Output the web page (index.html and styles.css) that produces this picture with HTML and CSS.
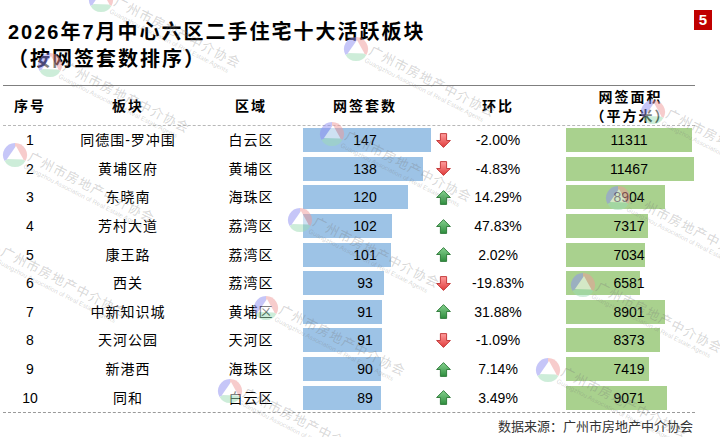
FILE: index.html
```html
<!DOCTYPE html>
<html lang="zh-CN">
<head>
<meta charset="utf-8">
<title>2026年7月中心六区二手住宅十大活跃板块</title>
<link rel="stylesheet" href="styles.css">
</head>
<body>
<svg class="defs" width="0" height="0" aria-hidden="true">
  <defs>
    <linearGradient id="gup" x1="0" y1="0" x2="0" y2="1">
      <stop offset="0" stop-color="#86d28f"/>
      <stop offset="1" stop-color="#2f8e3e"/>
    </linearGradient>
    <linearGradient id="gdn" x1="0" y1="0" x2="0" y2="1">
      <stop offset="0" stop-color="#ff9c9c"/>
      <stop offset="1" stop-color="#e03c3c"/>
    </linearGradient>
    <symbol id="up" viewBox="0 0 15 15">
      <polygon points="7.5,0.6 14.4,7.5 10.6,7.5 10.6,14.4 4.4,14.4 4.4,7.5 0.6,7.5" fill="url(#gup)" stroke="#2a7636" stroke-width="0.9" stroke-linejoin="round"/>
    </symbol>
    <symbol id="down" viewBox="0 0 15 15">
      <polygon points="4.4,0.6 10.6,0.6 10.6,7.5 14.4,7.5 7.5,14.4 0.6,7.5 4.4,7.5" fill="url(#gdn)" stroke="#c03030" stroke-width="0.9" stroke-linejoin="round"/>
    </symbol>
    <symbol id="logo" viewBox="0 0 26 26">
      <path d="M13 13 L2.6 19 A12 12 0 0 1 13 1 Z" fill="#8f8ff2"/>
      <path d="M13 13 L13 1 A12 12 0 0 1 23.4 19 Z" fill="#f09a9a"/>
      <path d="M13 13 L23.4 19 A12 12 0 0 1 2.6 19 Z" fill="#9ddcb5"/>
      <polygon points="14,4 21.5,17.5 5,17" fill="#ffffff"/>
    </symbol>
  </defs>
</svg>

<div class="page">
  <header class="head">
    <div class="title">
      <div>2026年7月中心六区二手住宅十大活跃板块</div>
      <div>（按网签套数排序）</div>
    </div>
    <div class="badge">5</div>
  </header>

  <section class="table">
    <div class="thead">
      <div class="th">序号</div>
      <div class="th">板块</div>
      <div class="th">区域</div>
      <div class="th th-bar">网签套数</div>
      <div></div>
      <div class="th">环比</div>
      <div></div>
      <div class="th th-area">网签面积<br>（平方米）</div>
    </div>
    <div class="tbody">
      <div class="row">
        <div class="cell num">1</div><div class="cell cjk">同德围-罗冲围</div><div class="cell cjk">白云区</div>
        <div class="barcell blue"><div class="bar" style="width:128px"></div><div class="val">147</div></div>
        <div class="arrow"><svg><use href="#down"/></svg></div><div class="cell pct">-2.00%</div><div></div>
        <div class="barcell green"><div class="bar" style="width:126.3px"></div><div class="val">11311</div></div>
      </div>
      <div class="row">
        <div class="cell num">2</div><div class="cell cjk">黄埔区府</div><div class="cell cjk">黄埔区</div>
        <div class="barcell blue"><div class="bar" style="width:120.2px"></div><div class="val">138</div></div>
        <div class="arrow"><svg><use href="#down"/></svg></div><div class="cell pct">-4.83%</div><div></div>
        <div class="barcell green"><div class="bar" style="width:128px"></div><div class="val">11467</div></div>
      </div>
      <div class="row">
        <div class="cell num">3</div><div class="cell cjk">东晓南</div><div class="cell cjk">海珠区</div>
        <div class="barcell blue"><div class="bar" style="width:104.5px"></div><div class="val">120</div></div>
        <div class="arrow"><svg><use href="#up"/></svg></div><div class="cell pct">14.29%</div><div></div>
        <div class="barcell green"><div class="bar" style="width:99.4px"></div><div class="val">8904</div></div>
      </div>
      <div class="row">
        <div class="cell num">4</div><div class="cell cjk">芳村大道</div><div class="cell cjk">荔湾区</div>
        <div class="barcell blue"><div class="bar" style="width:88.8px"></div><div class="val">102</div></div>
        <div class="arrow"><svg><use href="#up"/></svg></div><div class="cell pct">47.83%</div><div></div>
        <div class="barcell green"><div class="bar" style="width:81.7px"></div><div class="val">7317</div></div>
      </div>
      <div class="row">
        <div class="cell num">5</div><div class="cell cjk">康王路</div><div class="cell cjk">荔湾区</div>
        <div class="barcell blue"><div class="bar" style="width:87.9px"></div><div class="val">101</div></div>
        <div class="arrow"><svg><use href="#up"/></svg></div><div class="cell pct">2.02%</div><div></div>
        <div class="barcell green"><div class="bar" style="width:78.5px"></div><div class="val">7034</div></div>
      </div>
      <div class="row">
        <div class="cell num">6</div><div class="cell cjk">西关</div><div class="cell cjk">荔湾区</div>
        <div class="barcell blue"><div class="bar" style="width:81px"></div><div class="val">93</div></div>
        <div class="arrow"><svg><use href="#down"/></svg></div><div class="cell pct">-19.83%</div><div></div>
        <div class="barcell green"><div class="bar" style="width:73.5px"></div><div class="val">6581</div></div>
      </div>
      <div class="row">
        <div class="cell num">7</div><div class="cell cjk">中新知识城</div><div class="cell cjk">黄埔区</div>
        <div class="barcell blue"><div class="bar" style="width:79.2px"></div><div class="val">91</div></div>
        <div class="arrow"><svg><use href="#up"/></svg></div><div class="cell pct">31.88%</div><div></div>
        <div class="barcell green"><div class="bar" style="width:99.4px"></div><div class="val">8901</div></div>
      </div>
      <div class="row">
        <div class="cell num">8</div><div class="cell cjk">天河公园</div><div class="cell cjk">天河区</div>
        <div class="barcell blue"><div class="bar" style="width:79.2px"></div><div class="val">91</div></div>
        <div class="arrow"><svg><use href="#down"/></svg></div><div class="cell pct">-1.09%</div><div></div>
        <div class="barcell green"><div class="bar" style="width:93.5px"></div><div class="val">8373</div></div>
      </div>
      <div class="row">
        <div class="cell num">9</div><div class="cell cjk">新港西</div><div class="cell cjk">海珠区</div>
        <div class="barcell blue"><div class="bar" style="width:78.4px"></div><div class="val">90</div></div>
        <div class="arrow"><svg><use href="#up"/></svg></div><div class="cell pct">7.14%</div><div></div>
        <div class="barcell green"><div class="bar" style="width:82.8px"></div><div class="val">7419</div></div>
      </div>
      <div class="row">
        <div class="cell num">10</div><div class="cell cjk">同和</div><div class="cell cjk">白云区</div>
        <div class="barcell blue"><div class="bar" style="width:77.5px"></div><div class="val">89</div></div>
        <div class="arrow"><svg><use href="#up"/></svg></div><div class="cell pct">3.49%</div><div></div>
        <div class="barcell green"><div class="bar" style="width:101.3px"></div><div class="val">9071</div></div>
      </div>
    </div>
  </section>

  <div class="source">数据来源：广州市房地产中介协会</div>

  <div class="wm-layer" aria-hidden="true">
    <div class="wm wm-a"><svg class="wm-logo"><use href="#logo"/></svg><div class="wm-text">广州市房地产中介协会<span>Guangzhou Association of Real Estate Agents</span></div></div>
    <div class="wm wm-b"><svg class="wm-logo"><use href="#logo"/></svg><div class="wm-text">广州市房地产中介协会<span>Guangzhou Association of Real Estate Agents</span></div></div>
    <div class="wm wm-c"><svg class="wm-logo"><use href="#logo"/></svg><div class="wm-text">广州市房地产中介协会<span>Guangzhou Association of Real Estate Agents</span></div></div>
    <div class="wm wm-d"><svg class="wm-logo"><use href="#logo"/></svg><div class="wm-text">广州市房地产中介协会<span>Guangzhou Association of Real Estate Agents</span></div></div>
    <div class="wm wm-e"><svg class="wm-logo"><use href="#logo"/></svg><div class="wm-text">广州市房地产中介协会<span>Guangzhou Association of Real Estate Agents</span></div></div>
    <div class="wm wm-f"><svg class="wm-logo"><use href="#logo"/></svg><div class="wm-text">广州市房地产中介协会<span>Guangzhou Association of Real Estate Agents</span></div></div>
    <div class="wm wm-g"><svg class="wm-logo"><use href="#logo"/></svg><div class="wm-text">广州市房地产中介协会<span>Guangzhou Association of Real Estate Agents</span></div></div>
    <div class="wm wm-h"><svg class="wm-logo"><use href="#logo"/></svg><div class="wm-text">广州市房地产中介协会<span>Guangzhou Association of Real Estate Agents</span></div></div>
    <div class="wm wm-i"><svg class="wm-logo"><use href="#logo"/></svg><div class="wm-text">广州市房地产中介协会<span>Guangzhou Association of Real Estate Agents</span></div></div>
    <div class="wm wm-j"><svg class="wm-logo"><use href="#logo"/></svg><div class="wm-text">广州市房地产中介协会<span>Guangzhou Association of Real Estate Agents</span></div></div>
    <div class="wm wm-k"><svg class="wm-logo"><use href="#logo"/></svg><div class="wm-text">广州市房地产中介协会<span>Guangzhou Association of Real Estate Agents</span></div></div>
    <div class="wm wm-l"><svg class="wm-logo"><use href="#logo"/></svg><div class="wm-text">广州市房地产中介协会<span>Guangzhou Association of Real Estate Agents</span></div></div>
    <div class="wm wm-m"><svg class="wm-logo"><use href="#logo"/></svg><div class="wm-text">广州市房地产中介协会<span>Guangzhou Association of Real Estate Agents</span></div></div>
  </div>
</div>
</body>
</html>
```

FILE: styles.css
```css
* {
  box-sizing: border-box;
}

html, body {
  margin: 0;
  padding: 0;
  background: #ffffff;
}

body {
  font-family: "Liberation Sans", "Noto Sans CJK SC", sans-serif;
  color: #000000;
}

.defs {
  position: absolute;
  width: 0;
  height: 0;
  overflow: hidden;
}

.page {
  position: relative;
  width: 720px;
  height: 437px;
  overflow: hidden;
  background: #ffffff;
}

/* ---------- header ---------- */
.head {
  display: flex;
  justify-content: space-between;
  align-items: flex-start;
  padding: 0 8px 0 8px;
  height: 73px;
}

.title {
  padding-top: 19px;
  font-size: 20px;
  line-height: 27px;
  font-weight: bold;
  letter-spacing: 2px;
  white-space: nowrap;
}

.badge {
  margin-top: 10px;
  width: 18px;
  height: 20px;
  background: #c00000;
  color: #ffffff;
  font-size: 15px;
  font-weight: bold;
  line-height: 20px;
  text-align: center;
}

/* ---------- table ---------- */
.table {
  margin: 12px 0 0 3px;
  width: 692px;
}

.thead,
.row {
  display: grid;
  grid-template-columns: 54px 142px 104px 128px 24px 86px 25px 129px;
  align-items: center;
}

.thead {
  height: 41px;
  border-top: 1px solid #7f7f7f;
  border-bottom: 1px dashed #b8b8b8;
}

.th {
  text-align: center;
  font-size: 14px;
  font-weight: bold;
  letter-spacing: 2px;
  line-height: 19px;
  white-space: nowrap;
}

.th-bar {
  padding-right: 4px;
}

.th-area {
  padding-top: 2px;
}

.tbody {
  border-bottom: 1px dashed #9a9a9a;
}

.row {
  height: 28.6px;
}

.cell {
  text-align: center;
  font-size: 14px;
  line-height: 18px;
  white-space: nowrap;
}

.cjk {
  letter-spacing: 1px;
}

.barcell {
  display: grid;
  align-items: center;
  height: 100%;
}

.barcell > .bar,
.barcell > .val {
  grid-area: 1 / 1;
}

.bar {
  height: 24px;
}

.blue .bar {
  background: #9dc3e6;
}

.green .bar {
  background: #a9d18e;
}

.val {
  position: relative;
  text-align: center;
  font-size: 14px;
  line-height: 18px;
}

.blue .val {
  padding-right: 4px;
}

.green .val {
  padding-right: 3px;
}

.arrow {
  display: flex;
  justify-content: center;
  align-items: center;
}

.arrow svg {
  width: 15px;
  height: 15px;
  display: block;
}

/* ---------- footer ---------- */
.source {
  margin-top: 3px;
  padding-right: 27px;
  text-align: right;
  font-size: 13px;
  line-height: 22px;
  color: #333333;
}

/* ---------- watermarks ---------- */
.wm-layer {
  position: absolute;
  inset: 0;
  pointer-events: none;
}

.wm {
  position: absolute;
  width: 26px;
  height: 26px;
}

.wm-logo {
  display: block;
  width: 26px;
  height: 26px;
  opacity: 0.5;
}

.wm-text {
  position: absolute;
  left: 30px;
  top: 8px;
  transform: rotate(27deg);
  transform-origin: 0 0;
  white-space: nowrap;
  font-size: 13px;
  line-height: 14px;
  letter-spacing: 1px;
  color: rgba(120, 120, 120, 0.3);
}

.wm-text span {
  display: block;
  font-size: 6.5px;
  line-height: 8px;
  letter-spacing: 0;
}

.wm-a { left: 37px; top: 52px; }
.wm-b { left: 88px; top: -13px; }
.wm-c { left: 343px; top: 36px; }
.wm-d { left: 319px; top: 121px; }
.wm-e { left: 2px; top: 142px; }
.wm-f { left: 287px; top: 207px; }
.wm-g { left: 605px; top: 185px; }
.wm-h { left: -25px; top: 237px; }
.wm-i { left: 570px; top: 272px; }
.wm-j { left: 253px; top: 295px; }
.wm-k { left: 217px; top: 378px; }
.wm-l { left: 535px; top: 357px; }
.wm-m { left: 640px; top: 99px; }
```
